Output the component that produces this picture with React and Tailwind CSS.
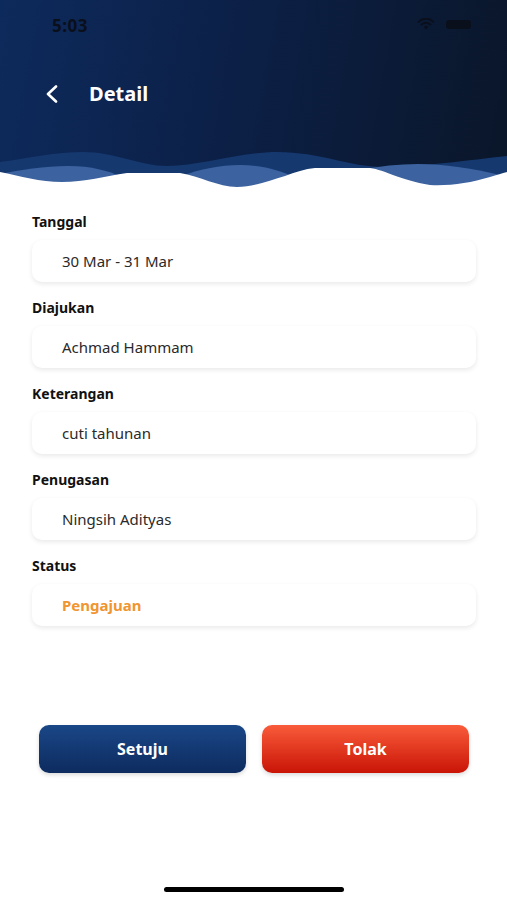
import React from "react";

const font = { fontFamily: '"Noto Sans", "Open Sans", sans-serif' };

function Field({ label, value, accent }) {
  return (
    <div className="flex flex-col">
      <div className="h-[20px] text-[14px] leading-[20px] font-bold text-[#111111]">{label}</div>
      <div className="mt-[8px] h-[42px] rounded-[10px] bg-white shadow-[0_2px_5px_rgba(0,0,0,0.09)] flex items-center pl-[30px]">
        <span className={accent ? "text-[15px] font-bold text-[#f0952f]" : "text-[15px] text-[#2a2a2a]"}>{value}</span>
      </div>
    </div>
  );
}

export default function App() {
  return (
    <div className="w-[507px] h-[900px] bg-white flex flex-col overflow-hidden" style={font}>
      <div className="relative h-[190px] bg-[linear-gradient(100deg,#0d2a5c_0%,#0c2047_45%,#0a1629_100%)] flex flex-col">
        <div className="h-[48px] flex items-start justify-between pl-[52px] pr-[36px] pt-[13px]">
          <span className="text-[17px] font-bold text-[#0a0f1c] tracking-[0.5px]">5:03</span>
          <div className="flex items-center gap-[11px] pt-[5px]">
            <svg width="18" height="12" viewBox="0 0 18 12">
              <path d="M9 11.5 L6.6 8.9 A3.4 3.4 0 0 1 11.4 8.9 Z" fill="#0a0f1c" />
              <path d="M4.4 6.6 A6.6 6.6 0 0 1 13.6 6.6" stroke="#0a0f1c" strokeWidth="1.9" fill="none" strokeLinecap="round" />
              <path d="M1.6 3.8 A10.4 10.4 0 0 1 16.4 3.8" stroke="#0a0f1c" strokeWidth="1.9" fill="none" strokeLinecap="round" />
            </svg>
            <div className="w-[25px] h-[9px] rounded-[3px] bg-[#0a0f1c]" />
          </div>
        </div>
        <div className="mt-[23px] h-[46px] flex items-center pl-[45px]">
          <svg width="14" height="18" viewBox="0 0 14 18">
            <path d="M11 1.5 L3 9 L11 16.5" stroke="white" strokeWidth="2.6" fill="none" strokeLinecap="round" strokeLinejoin="round" />
          </svg>
          <span className="ml-[30px] text-[20px] font-bold text-white">Detail</span>
        </div>
        <svg className="absolute left-0 bottom-0" width="507" height="50" viewBox="0 140 507 50" preserveAspectRatio="none">
          <path d="M0 162 C30 158 55 152 83 152 C115 152 140 166 167 166 C200 166 240 152 277 152 C320 152 350 167 383 167 C420 167 470 160 507 156 L507 190 L0 190 Z" fill="#15386f" />
          <path d="M0 174 C20 170 45 166 68 166 C92 166 108 171 120 176 L120 190 L0 190 Z" fill="#3c63a0" />
          <path d="M182 176 C200 169 220 165 240 165 C262 165 280 171 295 177 L295 190 L182 190 Z" fill="#3c63a0" />
          <path d="M360 170 C380 166 398 164 418 164 C445 164 470 168 500 175 L500 190 L360 190 Z" fill="#3c63a0" />
          <path d="M0 172 C20 176 40 182 62 182 C85 182 105 176 127 173 L180 173 C200 176 218 187 237 187 C255 187 270 180 285 176 C295 172 305 169 315 168 L370 168 C385 170 400 180 430 185 C450 186 470 183 490 177 C497 175 502 173 507 172 L507 190 L0 190 Z" fill="white" />
        </svg>
      </div>

      <div className="flex flex-col gap-[16px] pt-[22px] pl-[32px] pr-[31px]">
        <Field label="Tanggal" value="30 Mar - 31 Mar" />
        <Field label="Diajukan" value="Achmad Hammam" />
        <Field label="Keterangan" value="cuti tahunan" />
        <Field label="Penugasan" value="Ningsih Adityas" />
        <Field label="Status" value="Pengajuan" accent />
      </div>

      <div className="mt-[99px] flex gap-[16px] pl-[39px] pr-[38px]">
        <button className="flex-1 h-[48px] rounded-[10px] bg-[linear-gradient(180deg,#1a4787_0%,#0d2b5f_100%)] text-white text-[16px] font-bold shadow-[0_2px_4px_rgba(0,0,0,0.15)]">Setuju</button>
        <button className="flex-1 h-[48px] rounded-[10px] bg-[linear-gradient(180deg,#f95c3a_0%,#c91406_100%)] text-white text-[16px] font-bold shadow-[0_2px_4px_rgba(0,0,0,0.15)]">Tolak</button>
      </div>

      <div className="mt-[114px] flex justify-center">
        <div className="w-[180px] h-[5px] rounded-full bg-black" />
      </div>
    </div>
  );
}
